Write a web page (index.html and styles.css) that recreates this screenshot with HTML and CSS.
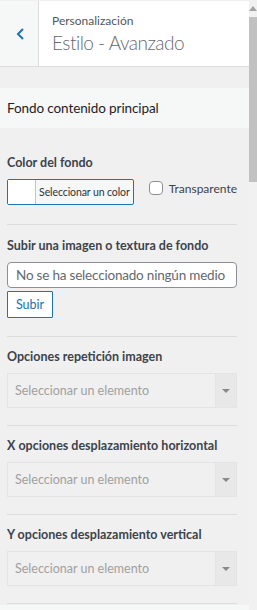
FILE: index.html
```html
<!DOCTYPE html>
<html lang="es">
<head>
  <meta charset="UTF-8">
  <meta name="viewport" content="width=device-width, initial-scale=1.0">
  <title>Estilo - Avanzado</title>
  <link rel="stylesheet" href="styles.css">
</head>
<body>
  <div class="panel">
    <div class="main">
      <!-- Cabecera -->
      <div class="header">
        <button class="back" aria-label="Volver">
          <svg width="9" height="12" viewBox="0 0 9 12"><path d="M7 1 L2 6 L7 11" fill="none" stroke="#2271b1" stroke-width="2"/></svg>
        </button>
        <div class="header-title">
          <span class="crumb">Personalización</span>
          <span class="title">Estilo - Avanzado</span>
        </div>
      </div>

      <div class="section-title">Fondo contenido principal</div>

      <div class="controls">
        <div class="control first">
          <div class="label">Color del fondo</div>
          <div class="color-row">
            <button class="color-btn">
              <span class="swatch"></span>
              <span class="color-text">Seleccionar un color</span>
            </button>
            <label class="check"><span class="box"></span>Transparente</label>
          </div>
        </div>

        <div class="control media">
          <div class="label">Subir una imagen o textura de fondo</div>
          <div class="media-field">No se ha seleccionado ningún medio</div>
          <button class="upload">Subir</button>
        </div>

        <div class="control">
          <div class="label">Opciones repetición imagen</div>
          <div class="select"><span>Seleccionar un elemento</span><span class="arrow"></span></div>
        </div>

        <div class="control">
          <div class="label">X opciones desplazamiento horizontal</div>
          <div class="select"><span>Seleccionar un elemento</span><span class="arrow"></span></div>
        </div>

        <div class="control">
          <div class="label">Y opciones desplazamiento vertical</div>
          <div class="select"><span>Seleccionar un elemento</span><span class="arrow"></span></div>
        </div>
      </div>

      <div class="next-band"></div>
    </div>

    <!-- Barra de desplazamiento -->
    <div class="scrollbar">
      <span class="scroll-up"></span>
      <span class="thumb"></span>
    </div>
  </div>
</body>
</html>
```

FILE: styles.css
```css
* {
  box-sizing: border-box;
}
body {
  margin: 0;
  font-family: Lato, sans-serif;
  background-color: #f0f0f1;
  color: #3c434a;
  white-space: nowrap;
}
.panel {
  display: flex;
  height: 610px;
  overflow: hidden;
}
.main {
  width: 249px;
}
.header {
  display: flex;
  height: 66px;
  margin-top: 1px;
  border-bottom: 1px solid #dcdcde;
  background-color: #fff;
}
.back {
  width: 39px;
  border: 0;
  border-right: 1px solid #dcdcde;
  background-color: #f6f7f7;
  padding: 0 0 0 2px;
  display: flex;
  align-items: center;
  justify-content: center;
}
.header-title {
  display: flex;
  flex-direction: column;
  padding: 11px 0 0 13px;
}
.crumb {
  font-size: 12px;
  line-height: 17px;
  color: #50575e;
}
.title {
  font-size: 19px;
  line-height: 27px;
  letter-spacing: -0.5px;
  color: #646970;
  font-weight: 300;
}
.section-title {
  margin-top: 21px;
  height: 40px;
  padding-left: 7px;
  font-size: 13.5px;
  line-height: 40px;
  letter-spacing: -0.1px;
  background-color: #f6f7f7;
  color: #1d2327;
}
.controls {
  padding: 0 12px 0 7px;
}
.control {
  padding: 11px 0 17px;
  border-bottom: 1px solid #dcdcde;
}
.control.first {
  padding-top: 26px;
  padding-bottom: 19px;
}
.control.media {
  padding-top: 12px;
  padding-bottom: 18px;
}
.label {
  font-size: 12.5px;
  font-weight: bold;
  line-height: 18px;
  margin-bottom: 7px;
  color: #3c434a;
}
.color-row {
  display: flex;
  align-items: center;
}
.color-btn {
  display: flex;
  width: 128px;
  height: 26px;
  padding: 0;
  border: 1px solid #2271b1;
  border-radius: 2px;
  background-color: #f6f7f7;
  font-family: inherit;
}
.swatch {
  width: 28px;
  height: 100%;
  background-color: #fff;
  border-right: 1px solid #c3c4c7;
}
.color-text {
  flex: 1;
  text-align: center;
  font-size: 10.5px;
  line-height: 24px;
  letter-spacing: -0.1px;
  color: #2c3338;
}
.check {
  display: flex;
  align-items: center;
  margin-left: 15px;
  margin-top: -8px;
  font-size: 12px;
  color: #3c434a;
}
.box {
  width: 14px;
  height: 14px;
  margin-right: 6px;
  border: 1px solid #8c8f94;
  border-radius: 4px;
  background-color: #fff;
}
.media-field {
  height: 26px;
  border: 1px solid #8c8f94;
  border-radius: 4px;
  background-color: #fff;
  padding-left: 8px;
  font-size: 13.5px;
  line-height: 24px;
  letter-spacing: -0.2px;
  color: #646970;
}
.upload {
  display: block;
  margin-top: 3px;
  width: 46px;
  height: 27px;
  padding: 0;
  border: 1px solid #2271b1;
  border-radius: 1px;
  background-color: #fff;
  font-family: inherit;
  font-size: 12.5px;
  color: #2271b1;
}
.select {
  display: flex;
  height: 35px;
  border: 1px solid #e4e4e4;
  background-color: #f0f0f0;
  font-size: 12.5px;
  line-height: 33px;
  color: #a0a0a0;
}
.select span:first-child {
  flex: 1;
  padding-left: 7px;
}
.arrow {
  width: 21px;
  border-left: 1px solid #e4e4e4;
  background-color: #e8e8e8;
  display: flex;
  align-items: center;
  justify-content: center;
}
.arrow::after {
  content: "";
  border-left: 4px solid transparent;
  border-right: 4px solid transparent;
  border-top: 4px solid #888;
}
.next-band {
  margin-top: 1px;
  height: 20px;
  background-color: #f6f7f7;
}
.scrollbar {
  width: 8px;
  background-color: #f1f1f1;
  display: flex;
  flex-direction: column;
  align-items: center;
}
.scroll-up {
  margin-top: 6px;
  border-left: 4px solid transparent;
  border-right: 4px solid transparent;
  border-bottom: 5px solid #a3a3a3;
}
.thumb {
  margin-top: 6px;
  width: 8px;
  height: 165px;
  background-color: #c1c1c1;
}
```
